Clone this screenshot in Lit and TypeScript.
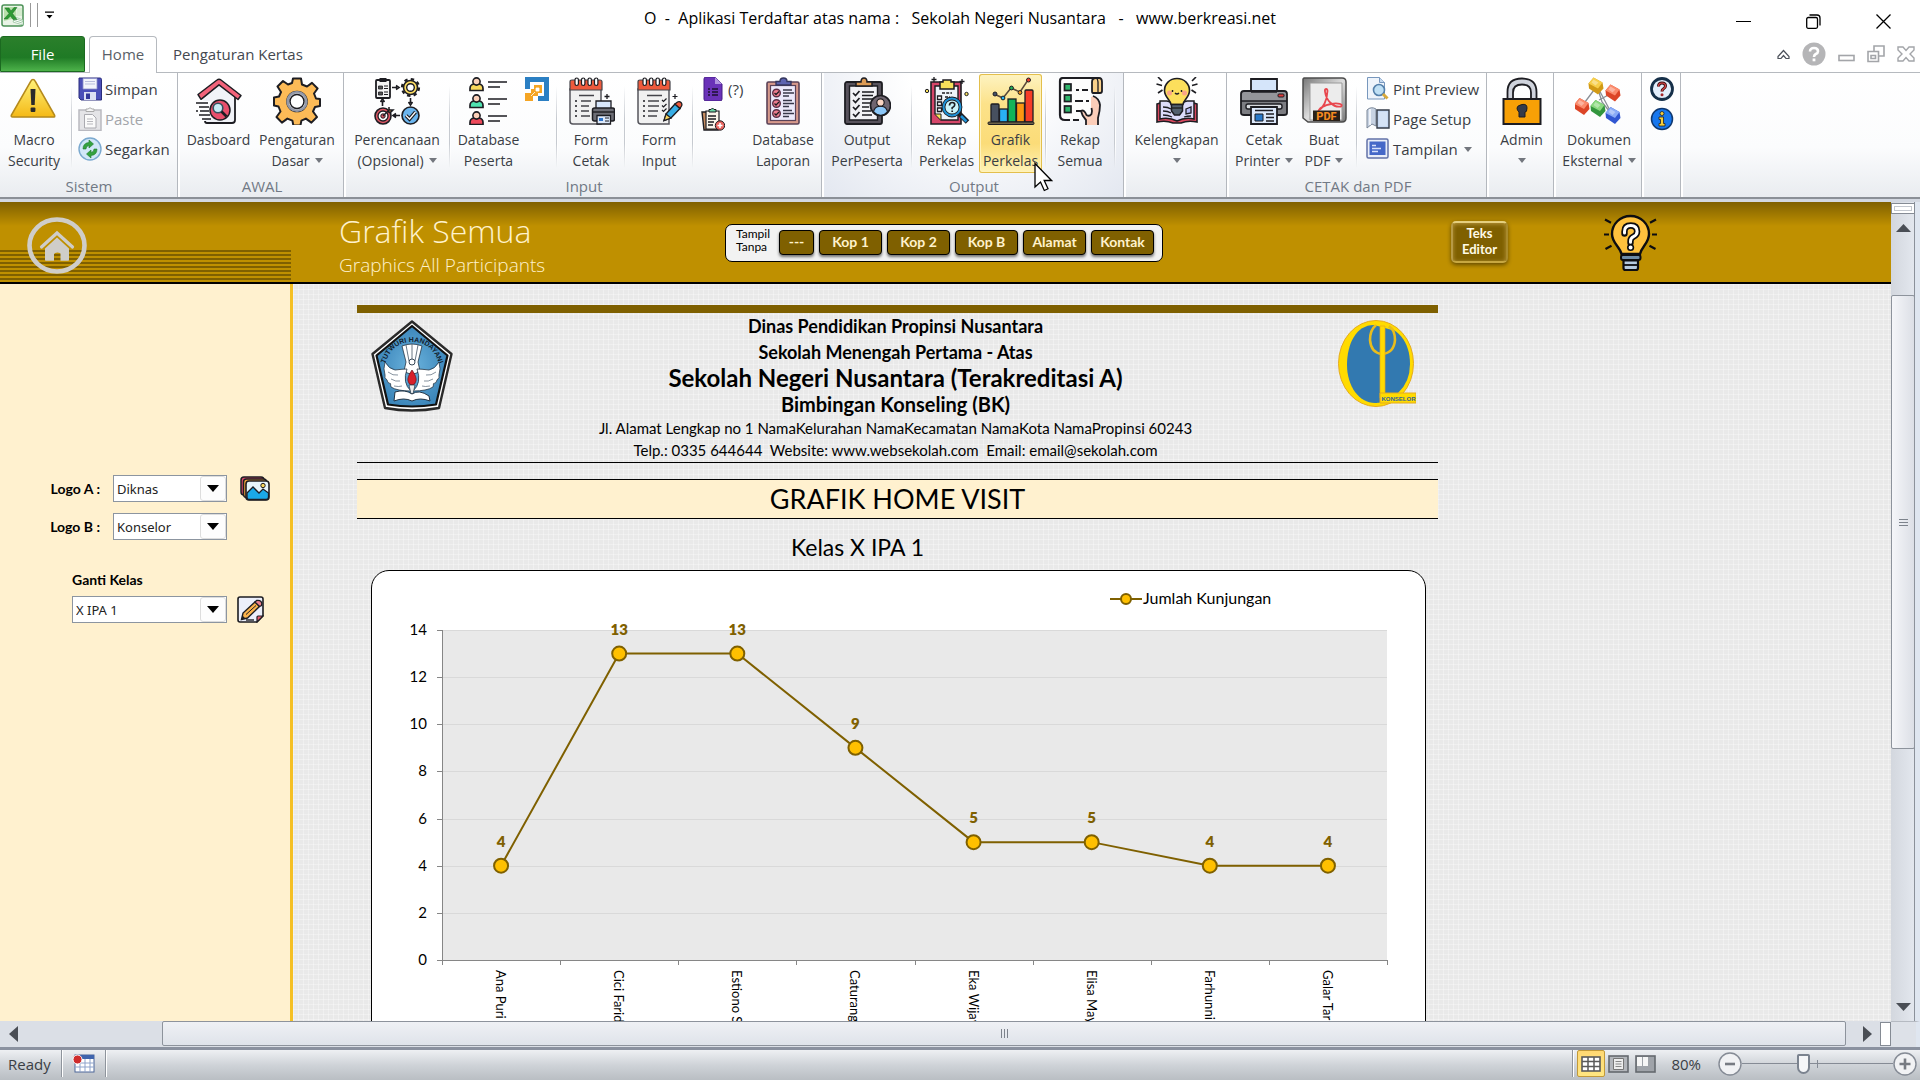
import { LitElement, html, svg, css, nothing } from "lit";
import { customElement, property, state } from "lit/decorators.js";
import { classMap } from "lit/directives/class-map.js";

const K = "#1d1d22";

/* Large ribbon icons, drawn on a 48 x 48 grid. */
const big: Record<string, unknown> = {
  warn: svg`<defs><linearGradient id="wg" x1="0" y1="0" x2="0" y2="1"><stop offset="0" stop-color="#fff27a"/><stop offset="1" stop-color="#f4b916"/></linearGradient></defs>
    <path d="M25 3.500 46 39.500H4z" transform="translate(0 1)" fill="#9a9a9a" opacity=".35"/>
    <path d="M23 2.500c1 0 1.600.5 2 1.300L44.500 38c.5 1.200 0 2-1.300 2H2.600c-1.200 0-1.700-.9-1.200-2L21 3.800c.4-.8 1-1.300 2-1.300z" fill="url(#wg)" stroke="#b58a1c" stroke-width="1.600"/>
    <path d="M20.500 12h5l-.8 16h-3.400z" fill="#2b2b2b"/><rect x="20.600" y="30.500" width="4.800" height="4.500" rx="1" fill="#2b2b2b"/>`,
  dash: svg`<path d="M8 20 24 6l16 13v24c0 2-1 3-3 3H12q-2 0-2-2" fill="#f1f3f8" stroke="${K}" stroke-width="1.800"/>
    <path d="M3 17.500 22 3q2-1.600 4 0l20 15.500-3 4L24 7.800 6 22.300z" fill="#f2637a" stroke="${K}" stroke-width="1.500" stroke-linejoin="round"/>
    <path d="M0 24h16v18H5V28H0z" fill="#fdfdfe"/><path d="M1 26h12M4 30h10M1 34h2m2 0h9M4 38h11M7 42h9" stroke="${K}" stroke-width="1.600"/>
    <circle cx="25" cy="33" r="10" fill="#e8506c" stroke="${K}" stroke-width="1.500"/>
    <circle cx="23" cy="31" r="4.800" fill="#c6ecf5" stroke="#34525f" stroke-width="1.600"/><path d="m26.500 34.500 5 5" stroke="${K}" stroke-width="2.600"/>`,
  gear: svg`<path d="M20 1h8l1 6 5 2 5-3.600 5.600 5.600L41 16l2 5 4 .5v7l-5 1-2 4.500 4 5.500-5.600 5.600-5.500-4-4.500 2-1 5h-7l-1-5-5-2-5.500 4-5.400-5.600 4-5.500-2-5L1 28v-8l5-1 2-4.500L4.500 9 10 3.500 15 7l4-1.500z" transform="translate(0 .5)" fill="#fdbb57" stroke="${K}" stroke-width="2" stroke-linejoin="round"/>
    <circle cx="24" cy="24.500" r="10" fill="#fff" stroke="${K}" stroke-width="1.600"/><circle cx="24" cy="24.500" r="9.300" fill="none" stroke="#9499a8" stroke-width="2.600"/><circle cx="24" cy="24.500" r="7" fill="#fff" stroke="${K}" stroke-width="1.500"/>`,
  plan: svg`<rect x="3" y="3" width="14" height="18" rx="1" fill="#f4f4f4" stroke="${K}" stroke-width="1.800"/><rect x="6.500" y="1" width="7" height="4" fill="${K}"/>
    <path d="M5.500 9h4v3h-4zm0 6h4v3h-4z" fill="#555" stroke="${K}" stroke-width=".8"/><path d="M11 9h4m-4 2.500h4M11 15h4m-4 2.500h4" stroke="${K}" stroke-width="1.200"/>
    <path d="M19 10.500h5m-1-2 3 2-3 2M37.500 21v5m-2-1 2 3 2-3M27 38.500h-6m2-2-3 2 3 2M9.500 29v-5m-2 1 2-3 2 3" fill="none" stroke="${K}" stroke-width="1.600"/>
    <circle cx="37.500" cy="10.500" r="8.500" fill="none" stroke="${K}" stroke-width="2.200" stroke-dasharray="3.400 3.280"/><circle cx="37.500" cy="10.500" r="7" fill="#fbdc62" stroke="${K}" stroke-width="1.600"/><circle cx="37.500" cy="10.500" r="3.800" fill="#fff" stroke="${K}" stroke-width="1.400"/>
    <circle cx="10" cy="39" r="8" fill="#e05765" stroke="${K}" stroke-width="1.600"/><circle cx="10" cy="39" r="5" fill="#fff" stroke="${K}" stroke-width="1.300"/><circle cx="10" cy="39" r="2.200" fill="#e05765" stroke="${K}"/><path d="m10 39 7-7m-1-2v3h4l-2 2h-3" stroke="${K}" stroke-width="1.500" fill="#fdbb57"/>
    <circle cx="37.500" cy="38.500" r="8.500" fill="#6bb5ee" stroke="${K}" stroke-width="1.600"/><path d="m33 38.500 3.500 3.500 6-7" fill="none" stroke="${K}" stroke-width="3.600"/><path d="m33 38.500 3.500 3.500 6-7" fill="none" stroke="#fff" stroke-width="1.300"/>`,
  people: svg`${[["#f9d85c", 0], ["#4fe3b0", 17], ["#ee4a5b", 34]].map(([c, y]) => svg`
      <path d="M5 ${Number(y) + 13.500}v-2q0-4 4-4.500h5q4 .5 4 4.500v2z" fill="${c}" stroke="${K}" stroke-width="1.700"/>
      <circle cx="11.500" cy="${Number(y) + 4.500}" r="3.600" fill="#fbd0b8" stroke="${K}" stroke-width="1.600"/>
      <path d="M23 ${Number(y) + 5}h19M23 ${Number(y) + 10}h12" stroke="${K}" stroke-width="1.600"/>`)}`,
  formPrint: svg`<path d="M3 12v32q0 3 3 3h28V12z" fill="#f1f1f1" stroke="#55555c" stroke-width="1.500"/><path d="M3 13V5q0-2 2-2h28q2 0 2 2v8z" fill="#ee5a3c" stroke="#44444a" stroke-width="1.200"/>
    ${[8, 14.500, 21, 27.500].map(x => svg`<rect x="${x}" y="1" width="3.400" height="7.500" rx="1.700" fill="#fff" stroke="${K}" stroke-width="1.200"/>`)}
    <path d="M12 18.500h15M14 24h10m-10 5h8m-8 5h8m-8 5h9" stroke="#44444a" stroke-width="1.500"/><path d="M8 24h2m-2 5h2m-2 5h2m-2 5h2" stroke="${K}" stroke-width="1.500"/>
    <path d="M40 17v5m-2.500-2.500h5" stroke="${K}" stroke-width="1.300"/>
    <path d="M29 32v-8h15v8" fill="#d7e6fb" stroke="${K}" stroke-width="1.300"/><rect x="25.500" y="31" width="22" height="13" rx="2" fill="#6d6e76" stroke="${K}" stroke-width="1.500"/><path d="M26 35h21" stroke="${K}" stroke-width="1.400"/><path d="M30 38.500h13.500V47H30z" fill="#dce9fb" stroke="${K}" stroke-width="1.300"/><path d="M32 41h4v3h-4z" fill="#2e74c9"/><path d="M38 41h4m-4 3h4" stroke="${K}"/>`,
  formInput: svg`<path d="M3 12v32q0 3 3 3h28V12z" fill="#f1f1f1" stroke="#55555c" stroke-width="1.500"/><path d="M3 13V5q0-2 2-2h28q2 0 2 2v8z" fill="#ee5a3c" stroke="#44444a" stroke-width="1.200"/>
    ${[8, 14.500, 21, 27.500].map(x => svg`<rect x="${x}" y="1" width="3.400" height="7.500" rx="1.700" fill="#fff" stroke="${K}" stroke-width="1.200"/>`)}
    <path d="M12 18.500h15M13 24h11m-11 5h11m-11 5h10m-10 5h9" stroke="#44444a" stroke-width="1.500"/><path d="M8 24h2m-2 5h2m-2 5h2m-2 5h2" stroke="${K}" stroke-width="1.500"/>
    <path d="m27 23 1.500 1.500 3-3m-4.500 7 1.500 1.500 3-3m-4.500 6 1.500 1.500 3-3M40 17v5m-2.500-2.500h5" fill="none" stroke="${K}" stroke-width="1.200"/>
    <path d="m31 37 9-10 5 4.500-9 9.500-7 2.500z" fill="#37aee6" stroke="${K}" stroke-width="1.400"/><path d="m40 27 2.500-2q2-1 3.500.5t.5 3.500L45 31.500z" fill="#ee5a3c" stroke="${K}" stroke-width="1.300"/><path d="m31 37 5 4-7 2.500z" fill="#f8d55d" stroke="${K}" stroke-width="1.200"/>`,
  dbLaporan: svg`<rect x="8" y="5" width="32" height="42" rx="1.500" fill="#d79a8c" stroke="#5b4257" stroke-width="1.600"/><rect x="11.500" y="8.500" width="25" height="35" fill="#ece9fb" stroke="#5b4257" stroke-width="1.200"/>
    <path d="M17 8V4.500h4Q21 1 24.500 1T28 4.500h4V8z" fill="#5d63b0" stroke="#34365e" stroke-width="1.400"/>
    ${[16, 26.500, 36.500].map(y => svg`<circle cx="17.500" cy="${y}" r="3.800" fill="#ee7c8e" stroke="#5b2f45" stroke-width="1.400"/><path d="m15.500 ${y} 1.500 1.500 3-3" fill="none" stroke="${K}" stroke-width="1.300"/><path d="M24 ${y - 3}h9M24 ${y}h11M24 ${y + 3}h6" stroke="#38384a" stroke-width="1.400"/>`)}`,
  output: svg`<rect x="2" y="5" width="37" height="42" rx="2" fill="#57525c" stroke="${K}" stroke-width="1.800"/><path d="M6.500 9h28v34H6.500z" fill="#f2f2f6" stroke="${K}" stroke-width="1.400"/><path d="M13 9V5h5q0-4 3-4t3 4h5v4z" fill="#dc9a54" stroke="${K}" stroke-width="1.500"/>
    <path d="m10 16 2.500 2.500L16.500 14M10 23l2.500 2.500L16.500 21M10 30l2.500 2.500L16.500 28M10 37l2.500 2.500L16.500 35" fill="none" stroke="${K}" stroke-width="1.700"/><path d="M19 15h12M19 18.500h11M19 22h12M19 26h8M19 30h7M19 34h9M19 38h10" stroke="${K}" stroke-width="1.400"/>
    <circle cx="37.500" cy="28.500" r="10" fill="#6f6570" stroke="${K}" stroke-width="1.700"/><path d="M30.500 35q1-5 5-5.500h4q4 .5 5 5.500-3 3.500-7 3.300t-7-3.300z" fill="#8cc7f8" stroke="${K}" stroke-width="1.200"/><circle cx="37.500" cy="25.500" r="3.700" fill="#fbd6c4" stroke="${K}" stroke-width="1.200"/>`,
  rekapKelas: svg`<path d="M8 5h30v42H8z" fill="#d64669" stroke="${K}" stroke-width="1.600"/><path d="M12 9h23v34H18l-6-6z" fill="#eef4fa" stroke="${K}" stroke-width="1.400"/><path d="M12 37h6v6" fill="#f7e05a" stroke="${K}"/>
    <path d="M17 12V5h3V3h8v2h3v7z" fill="#f7e05a" stroke="${K}" stroke-width="1.500"/><path d="M19 16h10M22 20h5M22 23h3M22 28h3M22 33h3" stroke="${K}" stroke-width="1.600" stroke-dasharray="3 1.200"/>
    <path d="M14.500 19h4v3.500h-4zm0 6h4v3.500h-4zm0 6h4v3.500h-4z" fill="#fff" stroke="${K}" stroke-width="1.300"/>
    <circle cx="29" cy="30" r="8.500" fill="#c9f4fb" stroke="${K}" stroke-width="3.800"/><circle cx="29" cy="30" r="8.500" fill="none" stroke="#1f93d8" stroke-width="2"/><path d="M26.500 28.500q0-3 2.700-3t2.500 2.600q0 1.500-2.500 2.600v1.500m0 1.300v1.500" fill="none" stroke="${K}" stroke-width="1.700"/>
    <path d="m36 36.500 8.500 8.500" stroke="${K}" stroke-width="5"/><path d="m38 39 5.500 5.500" stroke="#1f93d8" stroke-width="2.600"/><path d="M11 0v5M8.500 2.500h5M39 2v5m-2.500-2.500h5" stroke="${K}" stroke-width="1.300"/><circle cx="4" cy="14" r="1.700" fill="#f7e05a" stroke="${K}"/><circle cx="43.500" cy="17" r="1.700" fill="#f7e05a" stroke="${K}"/>`,
  grafik: svg`<path d="m7 17 9 4 8-10 9 4 8-12" fill="none" stroke="#5a4a3a" stroke-width="1.500"/>
    <circle cx="8" cy="17" r="2" fill="#43506a" stroke="${K}"/><circle cx="16" cy="21" r="1.900" fill="#29b6f6" stroke="${K}"/><circle cx="24.500" cy="11" r="1.900" fill="#1fb35a" stroke="${K}"/><circle cx="33" cy="15.500" r="1.900" fill="#f99b1c" stroke="${K}"/><circle cx="41.500" cy="3" r="2" fill="#f23b2a" stroke="${K}"/>
    <rect x="4" y="27" width="8" height="18" rx="1" fill="#47505f" stroke="${K}" stroke-width="1.300"/><rect x="12.500" y="32" width="8" height="13" fill="#29b0f3" stroke="${K}" stroke-width="1.300"/><rect x="21" y="22" width="8" height="23" fill="#12b359" stroke="${K}" stroke-width="1.300"/><rect x="29.500" y="26" width="8" height="19" fill="#fb9611" stroke="${K}" stroke-width="1.300"/><rect x="38" y="13" width="8" height="32" rx="1" fill="#f53d26" stroke="${K}" stroke-width="1.300"/><rect x="1" y="45" width="46" height="2.500" rx="1" fill="#6f6448" stroke="${K}"/>`,
  rekapSemua: svg`<path d="M7 1h32q-3 2-3 5v36H8q-4 0-4-4V4q0-3 3-3z" fill="#fdfdfd"/><path d="M40 1H7Q4 1 4 4v34q0 5 5 5h5m3 0h6" fill="none" stroke="${K}" stroke-width="2.200"/><path d="M36 5q0-4 4-4h3q3 0 3 4v9q0 2-2 2h-7q-1 0-1-2z" fill="#fbd28b" stroke="${K}" stroke-width="1.800"/><path d="M42 15V5q0-3-2-4" fill="none" stroke="${K}" stroke-width="1.300"/>
    ${[7, 18, 29].map(y => svg`<rect x="8.500" y="${y}" width="6.500" height="6.500" fill="#2fb56c" stroke="${K}" stroke-width="1.700"/>`)}<path d="M20 13h3m3 0h6M19 24h8m3 0h3M20 34h8" stroke="${K}" stroke-width="2"/>
    <path d="M30 48v-5q-4-4-5-9 3-2 5.500 4 2 2 4.500 1V20q6-3 8 6 1 8-1 14v8z" fill="#fbcdb9"/><path d="M30 48v-5q-4-4-5-9 3-2 5.500 4 3 2 5-1 1-3 0-6M37 19q6 2 7 9 0 6-2 13v7" fill="none" stroke="${K}" stroke-width="1.800"/>`,
  bulbBook: svg`<path d="M4 27q9-4 20 1 11-5 20-1v18q-9-2-16 1h-8q-7-3-16-1z" fill="#d9485e" stroke="${K}" stroke-width="1.600"/><path d="M7 24h7l10 3 10-3h7v18q-9-2-17 2-8-4-17-2z" fill="#dcdcfb" stroke="${K}" stroke-width="1.500"/><path d="M10 30q5 0 8 2m-8 2q5 0 8 2m-8 2q5 0 9 2M31 40q3-1 7-1" stroke="${K}" stroke-width="1.300" fill="none"/><path d="m33 32 5-2v6l-5 1z" fill="#b9bdf5" stroke="${K}" stroke-width="1.300"/>
    <path d="M24 1.500c7.500 0 12.500 5.500 12.500 12 0 7-6 9-6.500 14H18c-.5-5-6.500-7-6.500-14 0-6.500 5-12 12.500-12z" fill="#fcdf5c" stroke="${K}" stroke-width="1.600"/><circle cx="16.500" cy="16" r="2.500" fill="#f9a488"/><circle cx="31.500" cy="16" r="2.500" fill="#f9a488"/><path d="M19.500 13v2m9-2v2m-6.500 1q2 2 4 0" stroke="${K}" stroke-width="1.400" fill="none"/>
    <path d="M18.500 27.500h11V34l-3 4h-5l-3-4z" fill="#52606e" stroke="${K}" stroke-width="1.500"/><path d="M19 31h10" stroke="#222" stroke-width="1.400"/><path d="m9 4-4-4M9 8.500 3.500 7m6 6L5 16M39 4l4-4m-4 8.500L44.500 7m-6 6 4.500 3" stroke="${K}" stroke-width="1.600"/>`,
  printer: svg`<path d="M11 17V2h26v15" fill="#d5e5fa" stroke="${K}" stroke-width="1.800"/><path d="M4 14h40q3 0 3 3v19q0 2-3 2H4q-3 0-3-2V17q0-3 3-3z" fill="#7c7d82" stroke="${K}" stroke-width="1.800"/><path d="M2 24h44v-6q0-3-3-3H5q-3 0-3 3z" fill="#94959a"/><path d="M1 24h46M11 15h26" stroke="${K}" stroke-width="1.600"/><rect x="38" y="17" width="6" height="3" rx="1" fill="#e23d3d" stroke="${K}"/>
    <rect x="6" y="27" width="36" height="5" rx="2" fill="#d7dade" stroke="${K}" stroke-width="1.400"/><path d="M11 30h26v17H11z" fill="#dce9fb" stroke="${K}" stroke-width="1.800"/><path d="M15 37h8v7h-8z" fill="#2879c9" stroke="${K}"/><path d="M15 33.500h18M26 37h8m-8 3.500h8m-8 3.500h8" stroke="${K}" stroke-width="1.500"/>`,
  pdf: svg`<defs><linearGradient id="pg" x1="0" y1="0" x2="1" y2="1"><stop offset="0" stop-color="#777"/><stop offset=".5" stop-color="#ddd"/><stop offset="1" stop-color="#777"/></linearGradient></defs><path d="M4 1h38q4 0 4 4v36q0 4-4 4H8L3 41V2z" fill="url(#pg)" stroke="#4c4c4c" stroke-width="1.500"/><path d="M10 6h32v37H10z" fill="#ececec" stroke="#999"/>
    <path d="M19 33c4-2 8-9 8.500-19 0-3-3-2.500-2.500.5C26 23 33 31 41 29.500c3-2-3-4-10-2.500S20 31 19 33z" fill="none" stroke="#e8474e" stroke-width="1.800"/><path d="M13 33.500h27V44H13z" fill="#2a2119"/><text x="26.500" y="42.500" text-anchor="middle" font-family="Roboto, sans-serif" font-weight="800" font-size="11" fill="#f58a1f">PDF</text>`,
  lock: svg`<path d="M12 23V15Q12 4.500 24 4.500T36 15v8" fill="none" stroke="#cfd3dc" stroke-width="4.600"/><path d="M15 23V15.500Q15 7.500 24 7.500t9 8V23" fill="none" stroke="${K}" stroke-width="1.800"/><path d="M9.500 22v-7Q9.500 1.500 24 1.500T38.500 15v7" fill="none" stroke="${K}" stroke-width="1.800"/>
    <rect x="5.500" y="22" width="37" height="25" fill="#f7a006" stroke="${K}" stroke-width="2"/><path d="M21 35q-2-1.500-2-4t5-3.500 5 3.500-2 4v5h-6z" fill="#343b4a" stroke="${K}"/>`,
  gems: svg`<path d="m22 9 5 16 11 14M22 9 7 29m17-6 15-8M22 9l16 30" stroke="#8a8f96" stroke-width="1.300" fill="none"/>
    ${[["#f7cf4a", "#d29a14", 21, 8.500], ["#fb8b6c", "#dc4527", 38, 15.500], ["#fb8b6c", "#dc4527", 7, 29], ["#8ad97f", "#33963e", 23, 31], ["#8aabf7", "#3157d2", 38, 38]].map(([a, c, x, y]) => svg`<g transform="translate(${x} ${y})"><path d="m-2.500-8 9 5 1 6-5.500 6-9-6-.5-5z" fill="${c}"/><path d="m-2.500-8 9 5-4.500 6-9.500-5z" fill="${a}"/><path d="m-2.500-6 5 3-3 3-4-3z" fill="#fff" opacity=".35"/></g>`)}`
};

/* Small ribbon icons, drawn on a 24 x 24 grid. */
const small: Record<string, unknown> = {
  save: svg`<path d="M1 1h21q1.500 0 1.500 1.500V23H3l-2-2z" fill="#4b4fb8" stroke="#2a2d7c"/><path d="M5 1.500h14V12H5z" fill="#f2f4fb" stroke="#8b91c9" stroke-width=".8"/><path d="M7 4.500h10M7 7h10" stroke="#b9bedd"/><path d="M6 15h12v8H6z" fill="#dcdff3"/><path d="M8 16.500h4V22H8z" fill="#34389a"/>`,
  paste: svg`<path d="M1 3h22v20.500H1z" fill="#e4e4e7" stroke="#b9b9c0" stroke-width="1.500"/><path d="M8 4.500V2h2q2-2.500 4 0h2v2.500z" fill="#f5f5f6" stroke="#aaa"/><path d="M6.500 7.500h8l3.500 3.500v10h-11.500z" fill="#fafafa" stroke="#aaaab0"/><path d="M9 12h6m-6 2.500h6M9 17h6" stroke="#b8b8bd"/>`,
  refresh: svg`<circle cx="12" cy="12" r="11" fill="#d2e7f8" stroke="#7ba9cf" stroke-width="1.400"/><path d="M5 12q0-6 6-6.500V3l4.500 4L11 11V8.500Q8 9 8 12zM19 12q0 6-6 6.500V21l-4.500-4L13 13v2.500q3-.5 3-3.500z" fill="#35a23f" stroke="#1e7a2b" stroke-width=".6"/>`,
  square: svg`<path d="M0 0h24v24H13v-5h6V5H5v7H0z" fill="#2b7fc3"/><path d="M0 24V16h6v-4h3V8h8v8h-4v3H8v5z" fill="#f5a524"/><path d="M11 11h3v3h-3zM10 15l-4 4" fill="#fff" stroke="#fff" stroke-width=".8"/>`,
  gform: svg`<path d="M3 2q0-2 2-2h9l7 7v15q0 2-2 2H5q-2 0-2-2z" fill="#6a32b8" stroke="#451c85"/><path d="M14 0v7h7z" fill="#b294e0"/><path d="M7 12h2m-2 3h2m-2 3h2m2-6h6m-6 3h6m-6 3h6" stroke="#1d1030" stroke-width="1.500"/>`,
  clipAdd: svg`<path d="M1 5h16v18H3z" fill="#c98f62" stroke="${K}" stroke-width="1.400"/><path d="M5 4h13v16q-1 2-3 2H5z" fill="#faf5ea" stroke="${K}" stroke-width="1.200"/><path d="M8 5V2.500h2q1.500-3 3 0h2V5z" fill="#69d4a4" stroke="${K}"/><path d="M7 9h8m-8 3h8m-8 3h6m-6 3h5" stroke="${K}" stroke-width="1.300"/><circle cx="19" cy="18.500" r="4.700" fill="#e8655f" stroke="${K}"/><path d="M19 16v5m-2.500-2.500h5" stroke="#fff" stroke-width="1.500"/>`,
  preview: svg`<path d="M1.500.5h12l5 5V22h-17z" fill="#eef4fb" stroke="#7797bd"/><path d="M13.500.5v5h5" fill="#c5d9ef" stroke="#7797bd"/><circle cx="13" cy="13" r="5.500" fill="#bfe0f5" stroke="#5480ab" stroke-width="1.600"/><path d="m17 17 4.500 4.500" stroke="#d8a93a" stroke-width="3"/>`,
  pageSetup: svg`<path d="M1 3q4-4 9-1v17l-4-2-5 4z" fill="#c8d3e3" stroke="#7a8798"/><path d="M4 2v16" stroke="#eef2f8" stroke-width="2"/><path d="M11 3h12v18H11z" fill="#c8daf3" stroke="#333b48" stroke-width="1.400"/><path d="M13 5h8v14h-8z" fill="#d5e3f6"/>`,
  view: svg`<rect x="1" y="2" width="21" height="19" rx="1.500" fill="#e9eef9" stroke="#6272a8" stroke-width="1.500"/><rect x="3.500" y="4.500" width="16" height="13.500" fill="#4568c8"/><path d="M6 8.500h4m-4 3h9m-9 3h6" stroke="#d6e0fb" stroke-width="1.500"/>`,
  help: svg`<circle cx="12" cy="12" r="10.500" fill="#e3eefb" stroke="#163049" stroke-width="2.800"/><path d="M8.500 9.500Q8.500 6 12 6t3.500 3q0 1.800-2.200 3-1.300.8-1.300 2.500" fill="none" stroke="#3b1014" stroke-width="3"/><path d="M8.500 9.500Q8.500 6 12 6t3.500 3q0 1.800-2.200 3-1.300.8-1.300 2.500" fill="none" stroke="#e14848" stroke-width="1.200"/><circle cx="12" cy="17.800" r="1.500" fill="#a3262a"/>`,
  info: svg`<circle cx="12" cy="12" r="10.500" fill="#1777ee" stroke="#10386f" stroke-width="1.500"/><path d="M9 10h4.500v6.500H15V19H9v-2.500h1.500V12.500H9z" fill="#f6cf3c" stroke="#222" stroke-width=".8"/><circle cx="12" cy="6.500" r="2" fill="#f6cf3c" stroke="#222" stroke-width=".8"/>`
};

interface BigItem { kind: "big"; icon: string; lines: string[]; menu?: boolean; active?: boolean }
interface StackItem { kind: "stack"; rows: { icon: string; text?: string; name: string; off?: boolean; menu?: boolean }[] }
interface SepItem { kind: "sep" }
type Item = BigItem | StackItem | SepItem;

const sep: SepItem = { kind: "sep" };
const b = (icon: string, lines: string[], menu = false, active = false): BigItem => ({ kind: "big", icon, lines, menu, active });

const groups: { id: string; label?: string; items: Item[] }[] = [
  { id: "sistem", label: "Sistem", items: [b("warn", ["Macro", "Security"]), sep, { kind: "stack", rows: [
    { icon: "save", text: "Simpan", name: "Simpan" }, { icon: "paste", text: "Paste", name: "Paste", off: true }, { icon: "refresh", text: "Segarkan", name: "Segarkan" }] }] },
  { id: "awal", label: "AWAL", items: [b("dash", ["Dasboard"]), b("gear", ["Pengaturan", "Dasar"], true)] },
  { id: "input", label: "Input", items: [b("plan", ["Perencanaan", "(Opsional)"], true), sep, b("people", ["Database", "Peserta"]),
    { kind: "stack", rows: [{ icon: "square", name: "Aplikasi" }] }, sep, b("formPrint", ["Form", "Cetak"]), sep, b("formInput", ["Form", "Input"]), sep,
    { kind: "stack", rows: [{ icon: "gform", text: "(?)", name: "Formulir" }, { icon: "clipAdd", name: "Tambah" }] }, b("dbLaporan", ["Database", "Laporan"])] },
  { id: "output", label: "Output", items: [b("output", ["Output", "PerPeserta"]), sep, b("rekapKelas", ["Rekap", "Perkelas"]), b("grafik", ["Grafik", "Perkelas"], false, true), sep, b("rekapSemua", ["Rekap", "Semua"]), sep] },
  { id: "kelengkapan", items: [b("bulbBook", ["Kelengkapan", ""], true)] },
  { id: "cetak", label: "CETAK dan PDF", items: [b("printer", ["Cetak", "Printer"], true), b("pdf", ["Buat", "PDF"], true), sep, { kind: "stack", rows: [
    { icon: "preview", text: "Pint Preview", name: "Pint Preview" }, { icon: "pageSetup", text: "Page Setup", name: "Page Setup" }, { icon: "view", text: "Tampilan", name: "Tampilan", menu: true }] }] },
  { id: "admin", items: [b("lock", ["Admin", ""], true)] },
  { id: "dokumen", items: [b("gems", ["Dokumen", "Eksternal"], true)] },
  { id: "bantuan", items: [{ kind: "stack", rows: [{ icon: "help", name: "Bantuan" }, { icon: "info", name: "Info" }] }] }
];

@customElement("ribbon-bar")
class RibbonBar extends LitElement {
  static styles = css`
    :host { display: block; }
    * { box-sizing: border-box; }
    .bar { display: grid; grid-template-columns: 180px 166px 478px 302px 103px 260px 67px 88px 39px 1fr; height: 127px; border-top: 1px solid #b6babf; border-bottom: 2px solid #8b9097; background: linear-gradient(#ffffff, #fbfcfd 60%, #e9ecf0); }
    .group { display: grid; grid-template-rows: 102px 22px; border-right: 2px solid #fff; box-shadow: inset -1px 0 #b4b8be; }
    .items { display: grid; padding-top: 1px; }
    .sistem .items { grid-template-columns: 68px 8px 1fr; }
    .awal .items { grid-template-columns: 77px 80px; }
    .input .items { grid-template-columns: 102px 4px 73px 30px 4px 64px 4px 64px 4px 56px 64px; }
    .output .items { grid-template-columns: 86px 4px 65px 63px 8px 60px 10px; }
    .output { background: radial-gradient(ellipse at 50% 0, #ffffff 30%, #dfe4ee 110%); }
    .cetak .items { grid-template-columns: 70px 50px 16px 1fr; }
    .bantuan .items { padding-left: 5px; }
    .label { text-align: center; font-size: 15px; line-height: 22px; color: #717985; }
    button { font: inherit; color: inherit; background: none; border: 0; padding: 0; white-space: nowrap; }
    .big { position: relative; display: flex; flex-direction: column; align-items: center; height: 99px; padding-top: 3px; font-size: 14px; color: #3a3e45; }
    .big svg.pic { width: 48px; height: 48px; margin-bottom: 4px; flex: none; }
    .line { display: flex; align-items: center; justify-content: center; gap: 5px; height: 21px; line-height: 21px; }
    .big.active { background: linear-gradient(#fdf3c2, #fce28a 30%, #fbdc78 70%, #fff3b8); box-shadow: inset 0 0 0 1px #e3bf4c, inset 0 0 0 2px #fff2bb; border-radius: 3px; }
    .caret { width: 8px; height: 5px; flex: none; }
    .stack { display: flex; flex-direction: column; padding-left: 2px; }
    .input .stack { padding-left: 0; }
    .input .sep + .stack { padding-left: 6px; }
    .cetak .stack, .bantuan .stack { padding-left: 1px; }
    .row { display: flex; align-items: center; gap: 3px; height: 30px; font-size: 15px; line-height: 22px; color: #3a3e45; }
    .row svg.pic { width: 24px; height: 24px; }
    .row .caret { margin-left: 3px; }
    .row:disabled { color: #a3a5aa; }
    .sep { width: 2px; height: 82px; margin: 12px auto 0; background: linear-gradient(90deg, #c6cad0 50%, #fff 50%); -webkit-mask: linear-gradient(#0000, #000 40%, #000 70%, #0000); mask: linear-gradient(#0000, #000 40%, #000 70%, #0000); }
    .cursor { position: absolute; left: 55px; top: 88px; width: 19px; height: 30px; z-index: 2; pointer-events: none; }
  `;

  private caret = html`<svg class="caret" viewBox="0 0 8 5" aria-hidden="true"><path d="M0 0h8L4 5z" fill="#73777e"/></svg>`;

  private item(i: Item) {
    if (i.kind === "sep") return html`<span class="sep"></span>`;
    if (i.kind === "stack") return html`<div class="stack">${i.rows.map(r => html`
      <button class="row" ?disabled=${r.off} aria-label=${r.name}><svg class="pic" viewBox="0 0 24 24" aria-hidden="true">${small[r.icon]}</svg>${r.text ? html`<span>${r.text}</span>` : nothing}${r.menu ? this.caret : nothing}</button>`)}</div>`;
    return html`<button class=${classMap({ big: true, active: !!i.active })}>
      <svg class="pic" viewBox="0 0 48 48" aria-hidden="true">${big[i.icon]}</svg>
      ${i.lines.map((l, n) => html`<span class="line">${l}${i.menu && n === i.lines.length - 1 ? this.caret : nothing}</span>`)}
      ${i.active ? html`<svg class="cursor" viewBox="0 0 19 30" aria-hidden="true"><path d="M1 1.500V25l5.500-5 3.800 8.500 3.700-1.700-3.800-8.300h7.300z" fill="#fff" stroke="#000" stroke-width="1.300"/></svg>` : nothing}
    </button>`;
  }

  render() {
    return html`<div class="bar">${groups.map(g => html`
      <section class="group ${g.id}"><div class="items">${g.items.map(i => this.item(i))}</div>${g.label ? html`<div class="label">${g.label}</div>` : nothing}</section>`)}</div>`;
  }
}

@customElement("visit-chart")
class VisitChart extends LitElement {
  static styles = css`
    :host { display: block; }
    svg { display: block; width: 100%; }
    text { font-family: Lato, "Liberation Sans", sans-serif; font-size: 15px; fill: #000; }
    .value { font-weight: 800; font-size: 15px; fill: #7f6000; text-anchor: middle; }
    .axis { text-anchor: end; }
    .name { font-size: 13px; }
    .legend { font-size: 16px; }
    .series { fill: none; stroke: #7f6000; stroke-width: 2; }
    .dot { fill: #ffc000; stroke: #7f6000; stroke-width: 2; }
    .grid { stroke: #d9d9d9; }
    .tick { stroke: #868686; }
  `;

  @property({ attribute: false }) points: [string, number][] = [];

  render() {
    const x0 = 70, x1 = 1015, y0 = 389, unit = 330 / 14;
    const step = (x1 - x0) / this.points.length;
    const px = (i: number) => x0 + step * (i + .5);
    const py = (v: number) => y0 - v * unit;
    return html`<svg viewBox="0 0 1053 460" role="img" aria-label="Jumlah Kunjungan">
      <rect x=${x0} y="59" width=${x1 - x0} height="330" fill="#e9e9e9"/>
      ${[0, 2, 4, 6, 8, 10, 12, 14].map(v => svg`<path class="grid" d="M${x0} ${Math.round(py(v)) + .5}H${x1}"/><path class="tick" d="M${x0 - 5} ${Math.round(py(v)) + .5}h5"/><text class="axis" x="55" y="${Math.round(py(v)) + 5}">${v}</text>`)}
      <path class="tick" d="M${x0 + .5} 59V394M${x0} 389.500H${x1}"/>
      ${this.points.map((_, i) => svg`<path class="tick" d="M${Math.round(x0 + step * (i + 1)) + .5} 389v5"/>`)}
      <polyline class="series" points=${this.points.map(([, v], i) => `${px(i)},${py(v)}`).join(" ")}/>
      ${this.points.map(([n, v], i) => svg`<circle class="dot" cx=${px(i)} cy=${py(v)} r="7"/><text class="value" x=${px(i)} y="${py(v) - 19}">${v}</text><text class="name" transform="translate(${px(i) - 5} 399) rotate(90)">${n}</text>`)}
      <path class="series" d="M738 28h32"/><circle class="dot" cx="754" cy="28" r="5"/><text class="legend" x="771" y="33">Jumlah Kunjungan</text>
    </svg>`;
  }
}

@customElement("app-root")
class AppRoot extends LitElement {
  static styles = css`
    :host { display: block; height: 100vh; font-family: "Open Sans", "Noto Sans", sans-serif; color: #222; }
    * { box-sizing: border-box; }
    button { font: inherit; color: inherit; background: none; border: 0; padding: 0; }
    a { color: inherit; text-decoration: none; }
    svg { display: block; }
    .app { display: flex; flex-direction: column; height: 100%; overflow: hidden; background: #fff; }

    .title { display: grid; grid-template-columns: 1fr auto 1fr; align-items: center; height: 36px; }
    .quick { display: flex; align-items: center; gap: 6px; padding: 0 0 6px 1px; }
    .quick .bar { width: 1px; height: 24px; background: #999; }
    .quick .bar + button { padding-left: 1px; }
    .title h1 { margin: 0; font-size: 16px; font-weight: 400; color: #000; white-space: pre; }
    .win { display: flex; justify-content: flex-end; align-items: center; gap: 55px; padding: 7px 29px 0 0; }

    .tabs { display: flex; align-items: flex-end; height: 36px; font-size: 15px; line-height: 20px; }
    .tabs button { height: 36px; }
    .tabs .file { width: 85px; color: #fff; background: linear-gradient(#2b7f2b, #1f7a25 60%, #4db24a); border: 1px solid #1b6a20; border-radius: 3px 3px 0 0; }
    .tabs .home { width: 68px; margin: 0 16px -1px 4px; height: 37px; padding-bottom: 2px; color: #5a5f68; background: #fff; border: 1px solid #b6babf; border-bottom: 0; border-radius: 4px 4px 0 0; position: relative; }
    .tabs .paper { color: #444850; }
    .tools { display: flex; align-items: center; gap: 12px; margin-left: auto; padding-right: 5px; height: 36px; }

    .gap { height: 3px; flex: none; background: #d3d8e1; }
    .main { display: grid; grid-template-columns: minmax(0, 1fr) 29px; grid-template-rows: minmax(0, 1fr) 26px; flex: 1; min-height: 0; }
    .view { display: flex; flex-direction: column; min-height: 0; overflow: hidden; }

    .head { display: grid; grid-template-columns: 291px 434px 726px 153px 1fr; height: 82px; flex: none; border-bottom: 2px solid #000; background: linear-gradient(#7f6000, #bf9000 24px); }
    .brand { padding: 15px 0 0 27px; background: repeating-linear-gradient(#0000 0 2px, #7f6000 2px 4px) 0 100% / 100% 34px no-repeat; }
    .heading { padding: 9px 0 0 48px; color: #fff2cc; font-weight: 300; }
    .heading h2 { margin: 0; font-size: 32px; line-height: 40px; font-weight: 300; }
    .heading p { margin: 0; font-size: 19px; line-height: 28px; }
    .kop { justify-self: start; align-self: start; display: flex; align-items: center; gap: 5px; height: 38px; margin-top: 22px; padding: 0 8px 2px 10px; background: #f2f2f2; border: 1px solid #000; border-radius: 7px; font-family: Lato, sans-serif; }
    .kop p { margin: 0; width: 38px; font-size: 12px; line-height: 13px; color: #000; padding-bottom: 4px; }
    .kop button { width: 63px; height: 25px; padding-bottom: 1px; border: 1px solid #000; border-radius: 4px; background: #7f6000; color: #fff2cc; font-weight: 700; font-size: 14px; box-shadow: 0 2px 3px #0008; }
    .kop button.none { width: 35px; }
    .teks { align-self: start; justify-self: start; margin-top: 19px; width: 57px; height: 42px; padding-bottom: 2px; border-radius: 5px; background: #7f6000; border: 2px solid; border-color: #e5cf7e #a88a2c #c7a741 #b79a45; box-shadow: 0 2px 4px #0007, inset 0 1px 4px #b9973e; color: #fffbe8; font: 700 13px/16px Lato, sans-serif; }
    .idea { align-self: start; justify-self: start; margin-top: 12px; }

    .body { display: grid; grid-template-columns: 293px minmax(0, 1fr); flex: 1; min-height: 0; }
    .side { background: #fff1cf; border-right: 3px solid #f5c024; padding-top: 191px; font-family: Lato, sans-serif; font-size: 14px; color: #000; }
    .field { display: grid; grid-template-columns: 100px 114px auto; column-gap: 13px; align-items: center; margin-bottom: 11px; }
    .field label { font-weight: 700; text-align: right; }
    .field .pick { height: 27px; }
    .class { display: grid; grid-template-columns: 155px auto; column-gap: 10px; row-gap: 7px; padding: 20px 0 0 72px; align-items: center; }
    .class label { grid-column: 1 / -1; font-weight: 700; line-height: 18px; }
    .class .pick { height: 27px; }
    .pick { position: relative; }
    .pick select { appearance: none; width: 100%; height: 100%; padding: 0 28px 0 3px; border: 1px solid #8c95a0; border-radius: 0; background: #fff; font: 13px "Noto Sans", sans-serif; color: #222; }
    .pick span { position: absolute; right: 1px; top: 1px; bottom: 1px; width: 26px; border: 1px solid #ddd; border-radius: 3px; background: #fdfdfd; display: grid; place-items: center; pointer-events: none; }

    .sheet { overflow: hidden; padding: 21px 0 0 64px; background-color: #e9e9e9; background-image: repeating-linear-gradient(90deg, #ffffff4d 0 1px, #0000 1px 5px), repeating-linear-gradient(#ffffff4d 0 1px, #0000 1px 5px); }
    .page { max-width: 1081px; margin-right: 32px; font-family: Lato, "Liberation Sans", sans-serif; color: #000; }
    .letter { display: grid; grid-template-columns: 82px 1fr 82px; padding: 0 18px 0 14px; border-top: 8px solid #7f6000; border-bottom: 1px solid #000; }
    .letter svg { margin-top: 7px; }
    .lines { text-align: center; white-space: pre; }
    .lines p { margin: 0; line-height: 26px; font-weight: 700; font-size: 18px; }
    .lines .school { font-size: 24px; }
    .lines .unit { font-size: 20px; }
    .lines .addr { font-weight: 400; font-size: 15px; line-height: 22px; }
    .lines .addr:last-child { line-height: 23px; }
    .band { margin-top: 16px; height: 40px; display: grid; place-items: center; background: #fff1cf; border: solid #000; border-width: 1px 0; }
    .band h3 { margin: 0; font-size: 27px; font-weight: 400; line-height: 38px; }
    .kelas { margin: 0; padding: 5px 80px 0 0; text-align: center; font-size: 23px; font-weight: 400; line-height: 46px; }
    .card { margin: 0 12px 0 14px; background: #fff; border: 1px solid #000; border-radius: 18px 18px 0 0; }

    .vbar { display: flex; flex-direction: column; align-items: center; padding-right: 5px; background: linear-gradient(90deg, #d3d7de, #e3e7ee 80%, #8b919a 80% 84%, #dfe6f0 84%); }
    .vbar .split { width: 24px; height: 11px; margin-top: 1px; border: 1px solid #858b94; background: #fff; box-shadow: inset 0 0 0 2px #fff, inset 0 0 0 3px #c3c7ce; flex: none; }
    .vbar button, .hbar button { display: grid; place-items: center; flex: none; }
    .vbar button { width: 24px; height: 28px; }
    .vtrack { flex: 1; width: 24px; padding-top: 53px; min-height: 0; }
    .vthumb { height: 65%; border: 1px solid #8d939c; border-radius: 2px; background: linear-gradient(90deg, #f5f6f9, #dcdfe6); display: grid; place-items: center; }
    .hbar { display: flex; align-items: center; background: #dbdfe6; }
    .hbar button { width: 26px; height: 24px; }
    .htrack { flex: 1; height: 26px; padding: 0 8px 0 136px; }
    .hthumb { height: 25px; border: 1px solid #8d939c; border-radius: 2px; background: linear-gradient(#eff1f5, #dfe3ea); display: grid; place-items: center; }
    .hbar .split { width: 11px; height: 24px; border: 1px solid #858b94; background: #fff; }
    .corner { border-right: 4px solid #dfe6f0; background: #dde1e8; border-top: 1px solid #b5bac2; }

    .status { display: flex; align-items: center; height: 33px; flex: none; border-top: 3px solid #8b92a0; background: linear-gradient(#eef0f3, #cfd3d8 50%, #b9bec3); font-size: 15px; color: #3a3e45; padding: 0 3px 3px 8px; }
    .status .bar { width: 2px; height: 27px; background: linear-gradient(90deg, #8e949c 50%, #fff 50%); margin: 0 9px 0 10px; }
    .modes { display: flex; align-items: center; gap: 6px; margin-left: auto; }
    .modes .bar { margin: 0 -3px 0 0; }
    .modes .on { width: 28px; height: 27px; display: grid; place-items: center; margin-right: -3px; border: 1px solid #c29a3a; border-radius: 2px; background: linear-gradient(#ffd873, #ffe680); }
    .pct { margin: 0 17px 0 15px; font-size: 15px; }
    input[type="range"] { appearance: none; width: 151px; height: 22px; margin: 0; background: linear-gradient(#858b95, #858b95) 50% 50% / 100% 1px no-repeat, linear-gradient(#858b95, #858b95) 50% 50% / 1px 8px no-repeat; }
    input[type="range"]::-webkit-slider-thumb { appearance: none; width: 13px; height: 20px; border: 2px solid #7b838f; border-radius: 2px 2px 7px 7px; background: #f5f6f8; }
  `;

  @state() private zoom = 80;

  private visits: [string, number][] = [["Ana Puri", 4], ["Cici Farid", 13], ["Estiono S", 13], ["Caturang", 9], ["Eka Wijay", 5], ["Elisa May", 5], ["Farhunni", 4], ["Galar Tar", 4]];

  private pick(id: string, value: string) {
    return html`<div class="pick"><select id=${id}><option>${value}</option></select><span><svg width="12" height="7" viewBox="0 0 12 7" aria-hidden="true"><path d="M0 0h12L6 7z" fill="#000"/></svg></span></div>`;
  }

  private tri(d: string, w: number, h: number) {
    return html`<svg width=${w} height=${h} viewBox="0 0 ${w} ${h}" aria-hidden="true"><path d=${d} fill="#4a4e55"/></svg>`;
  }

  private titleBar() {
    return html`<header class="title">
      <div class="quick">
        <svg width="23" height="23" viewBox="0 0 23 23" aria-hidden="true"><rect x="1" y="1" width="21" height="21" rx="2" fill="#eaf4e7" stroke="#4c9157" stroke-width="1.500"/><path d="M3 3h12v11L3 17z" fill="#b9e0ab"/><path d="m14 13 8 3v5l-10-3z" fill="#fff" stroke="#8bbd92" stroke-width=".7"/><path d="M16 4h5v8h-6" fill="#d5ebcf"/><path d="m12 16 9 3m-7-4.500 8 3" stroke="#8bbd92" stroke-width=".8"/><path d="m4 4 4 .0 2 3 3-3.500h3L11.500 9.500l4.500 6h-4L9.500 12 6.500 15H3l5-5.500z" fill="#2f9a35" stroke="#1c6c27" stroke-width=".5"/></svg>
        <span class="bar"></span><span class="bar"></span>
        <button aria-label="Sesuaikan"><svg width="9" height="8" viewBox="0 0 9 8"><path d="M0 .5h9v1.200H0zM1.500 4h6L4.500 7.500z" fill="#000"/></svg></button>
      </div>
      <h1>O  -  Aplikasi Terdaftar atas nama :   Sekolah Negeri Nusantara   -   www.berkreasi.net</h1>
      <div class="win">
        <button aria-label="Minimize"><svg width="15" height="15"><path d="M0 7.500h15" stroke="#000"/></svg></button>
        <button aria-label="Restore"><svg width="15" height="15" fill="none" stroke="#000" stroke-width="1.300"><rect x=".7" y="3.500" width="10.800" height="10.800" rx="1.500"/><path d="M3.500 1h7.500q3 0 3 3v7.500"/></svg></button>
        <button aria-label="Close"><svg width="15" height="15"><path d="m.5.5 14 14m0-14-14 14" stroke="#000" stroke-width="1.300"/></svg></button>
      </div>
    </header>
    <nav class="tabs">
      <button class="file">File</button><button class="home">Home</button><button class="paper">Pengaturan Kertas</button>
      <div class="tools">
        <button aria-label="Ciutkan pita"><svg width="13" height="11" viewBox="0 0 13 11"><path d="M1 7.500 6.500 1.500 12 7.500v2H9L6.500 6.500 4 9.500H1z" fill="#fff" stroke="#4c515a" stroke-width="1.200"/></svg></button>
        <button aria-label="Bantuan"><svg width="24" height="24" viewBox="0 0 24 24"><circle cx="12" cy="12" r="11.500" fill="#b5b5b7"/><path d="M8 9.500Q8 6 12 6t4 3.200q0 1.800-2.200 2.800-1.800 1-1.800 3" fill="none" stroke="#fff" stroke-width="2.600"/><rect x="10.600" y="16.500" width="2.800" height="2.800" fill="#fff"/></svg></button>
        <button aria-label="Kecilkan jendela"><svg width="17" height="18"><rect x="1" y="10.500" width="15" height="5" fill="#fff" stroke="#a3a5a9" stroke-width="1.600"/></svg></button>
        <button aria-label="Pulihkan jendela"><svg width="18" height="18" fill="#fff" stroke="#a3a5a9" stroke-width="1.600"><path d="M7 1h10v10H7z"/><path d="M1 6.500h10.500v10H1zM4 10.500h4.500v3H4z"/></svg></button>
        <button aria-label="Tutup jendela"><svg width="18" height="16" viewBox="0 0 18 16"><path d="M1 1h5l3 3.500L12 1h5v3l-4 4 4 4v3h-5l-3-3.500L6 15H1v-3l4-4-4-4z" fill="#fff" stroke="#a3a5a9" stroke-width="1.400"/></svg></button>
      </div>
    </nav>`;
  }

  private pageHead() {
    return html`<div class="head">
      <div class="brand"><a href="#home" aria-label="Home"><svg width="60" height="57" viewBox="0 0 60 57"><ellipse cx="30" cy="28.500" rx="27.500" ry="26" fill="none" stroke="#cfcdc9" stroke-width="4.600"/><path d="M14.500 30 30 16l15.500 14" fill="none" stroke="#cfcdc9" stroke-width="3.200" stroke-linecap="round"/><path d="M30 20.500 42 31.500V43q0 .8-.8.8H33.500V37q0-1.500-3-1.500T27 37v6.800H18.800q-.8 0-.8-.8V31.500z" fill="#cfcdc9"/></svg></a></div>
      <div class="heading"><h2>Grafik Semua</h2><p>Graphics All Participants</p></div>
      <div class="kop"><p>Tampil<br>Tanpa</p><button class="none">---</button>${["Kop 1", "Kop 2", "Kop B", "Alamat", "Kontak"].map(t => html`<button>${t}</button>`)}</div>
      <button class="teks">Teks<br>Editor</button>
      <button class="idea" aria-label="Petunjuk"><svg width="53" height="58" viewBox="0 0 53 58"><path d="M26.500 2C37 2 45 10 45 20c0 9-7 12-9 20H17.500c-2-8-9.500-11-9.500-20C8 10 16 2 26.500 2z" fill="#fec13d" stroke="#0d0d10" stroke-width="2.400"/><path d="M20.500 19.500v-2q0-6 6.300-6t6.300 6q0 3.500-3.600 5.200-3 1.400-3 4.600v1.500" fill="none" stroke="#0d0d10" stroke-width="6.400" stroke-linecap="round"/><path d="M20.500 19v-1.500q0-6 6.300-6t6.300 6q0 3.500-3.600 5.200-3 1.400-3 4.600v1" fill="none" stroke="#fff" stroke-width="3" stroke-linecap="round"/><circle cx="26.600" cy="33.500" r="2.800" fill="#fff" stroke="#0d0d10" stroke-width="1.600"/>
        <rect x="17" y="41" width="19.500" height="5" rx="2" fill="#6d8ba6" stroke="#0d0d10" stroke-width="2"/><path d="M19.500 46.500h14.500V54q0 2-2 2H21.500q-2 0-2-2z" fill="#b7cbe0" stroke="#0d0d10" stroke-width="2.200"/><path d="M20 51h14" stroke="#0d0d10" stroke-width="1.800"/><path d="m1 5.500 6 3.200M0 20.500h5M1.500 35l6-3.200M52 5.500l-6 3.200M53 20.500h-5M51.500 35l-6-3.200" stroke="#0d0d10" stroke-width="2.200"/></svg></button>
    </div>`;
  }

  private sidebar() {
    return html`<aside class="side">
      <div class="field"><label for="logo-a">Logo A :</label>${this.pick("logo-a", "Diknas")}
        <button aria-label="Gambar"><svg width="30" height="25" viewBox="0 0 30 25"><rect x="1" y="1" width="23" height="18" rx="3" fill="#d9456b" stroke="${K}" stroke-width="1.500"/><rect x="3.500" y="3" width="23" height="18.500" rx="3" fill="#f5a53c" stroke="${K}" stroke-width="1.500"/><rect x="6" y="5" width="23" height="19" rx="3" fill="#e8f5fb" stroke="${K}" stroke-width="1.600"/><path d="m7 17 6-6 6 6 4-4 5.500 4v4q0 2.500-2.500 2.500H9Q7 23.500 7 21z" fill="#1aa9e8" stroke="${K}" stroke-width="1.300"/><circle cx="23" cy="9.500" r="2.200" fill="#f8d55d" stroke="${K}"/></svg></button></div>
      <div class="field"><label for="logo-b">Logo B :</label>${this.pick("logo-b", "Konselor")}</div>
      <div class="class"><label for="kelas">Ganti Kelas</label>${this.pick("kelas", "X IPA 1")}
        <button aria-label="Ubah kelas"><svg width="27" height="27" viewBox="0 0 27 27"><path d="M3 1h21q2 0 2 2v17l-6 6H3q-2 0-2-2V3q0-2 2-2z" fill="#eceffb" stroke="${K}" stroke-width="1.600"/><path d="M20 26v-5q0-1 1-1h5z" fill="#ee5b6e" stroke="${K}" stroke-width="1.200"/><path d="M4.500 23.500 6 17 18 6l4.500 4.500-12 11.500z" fill="#fbb24c" stroke="${K}" stroke-width="1.400"/><path d="m18 6 1.500-1.500q3-.5 4.500 1t.5 4L22.500 10.500z" fill="#ee8090" stroke="${K}" stroke-width="1.300"/><path d="m9 18.500 10-9" stroke="${K}"/><path d="m4.500 23.500 1-4 3 3z" fill="${K}"/><path d="M9 24h8" stroke="${K}" stroke-width="1.400"/></svg></button></div>
    </aside>`;
  }

  private emblem() {
    return html`<svg width="82" height="92" viewBox="0 0 82 92" role="img" aria-label="Tut Wuri Handayani">
      <defs><radialGradient id="em"><stop offset="0" stop-color="#6bb3dd"/><stop offset="1" stop-color="#3d87bb"/></radialGradient><path id="arc" d="M14 44Q21 22 41 22t27 22"/></defs>
      <path d="M41 1.500 80.500 34 68 88q-27 5-54 0L1.500 34z" fill="#fff" stroke="#2a2a2a" stroke-width="2.400" stroke-linejoin="round"/>
      <path d="M41 6 76.500 35.500 65 84.500q-24 4-48 0L5.500 35.500z" fill="url(#em)" stroke="#111" stroke-width="2.200" stroke-linejoin="round"/>
      <text font-family="Liberation Sans, sans-serif" font-size="7" font-weight="700" fill="#12202c"><textPath href="#arc">TUTWURI HANDAYANI</textPath></text>
      <path d="M31 26q10-4 20 0l-4 16 2 9q-8 6-16 0l2-9z" fill="#fff" stroke="#234" stroke-width=".8"/><path d="m35 25 3 16m3-17v15m6-14-3 16" stroke="#456" stroke-width=".8"/><circle cx="41" cy="42" r="3" fill="#fff" stroke="#234" stroke-width=".9"/>
      <path d="M36 49q-5 14 4 22-14 0-20-4-1-3 0-3-4-1-4-4-3-2-2-5-2-6 0-13 4 7 10 8 8-1 12-1zM46 49q5 14-4 22 14 0 20-4 1-3 0-3 4-1 4-4 3-2 2-5 2-6 0-13-4 7-10 8-8-1-12-1z" fill="#fff" stroke="#234" stroke-width=".8"/>
      <path d="M17 52q5 4 10 3m-7 4q5 3 9 2m-6 5q5 1 8 0m34-14q-5 4-10 3m7 4q-5 3-9 2m6 5q-5 1-8 0" fill="none" stroke="#567" stroke-width=".7"/>
      <path d="M41 50q5 7 4 11t-4 4-4-4 4-11z" fill="#d8202a" stroke="#701015" stroke-width=".7"/><path d="M38 65h6l-2 9h-2z" fill="#eee" stroke="#234" stroke-width=".7"/>
      <path d="M24 72q10-3 17 2 7-5 17 2l1 5q-10-4-18 0-8-4-18 0z" fill="#fff" stroke="#234" stroke-width="1"/>
    </svg>`;
  }

  private konselor() {
    return html`<svg width="78" height="87" viewBox="0 0 78 87" role="img" aria-label="Konselor">
      <ellipse cx="38" cy="43.500" rx="37.500" ry="43" fill="#ffdb00" stroke="#e5ab1e" stroke-width="1"/>
      <path d="M36 5C18 5 9 24 9 45s12 38 28 38c4 0 7-1 7-1L60 73Q72 62 72 44C72 22 60 5 36 5z" fill="#3279b0"/>
      <path d="M36 5Q46 3 54 10q-10-3-18-5z" fill="#ffdb00"/><path d="M38 5q-6 5-6 15 1 13 12 14 12-1 13-14 0-10-6-14" fill="none" stroke="#e9bd1c" stroke-width="2.600"/>
      <path d="M42 6h5v72h-5z" fill="#ffdb00" stroke="#e5ab1e" stroke-width=".7"/><path d="M42 73h36v10H42z" fill="#ffdb00" stroke="#e5ab1e" stroke-width="1"/>
      <text x="60.500" y="80.500" text-anchor="middle" font-family="Liberation Sans, sans-serif" font-weight="700" font-size="6" fill="#31639a">KONSELOR</text>
    </svg>`;
  }

  private statusBar() {
    return html`<footer class="status">
      <span>Ready</span><span class="bar"></span>
      <button aria-label="Rekam makro"><svg width="23" height="20" viewBox="0 0 23 20"><rect x="3" y="1" width="19" height="17" fill="#fff" stroke="#4d6799"/><path d="M3 1h19v4H3z" fill="#3f64ad"/><path d="M3 9h19M3 13h19M8 5v13m5-13v13m5-13v13" stroke="#8ea3cb"/><circle cx="5.500" cy="5.500" r="4.500" fill="#cf2c2c" stroke="#fff"/></svg></button><span class="bar"></span>
      <div class="modes"><span class="bar"></span>
        <button class="on" aria-label="Normal"><svg width="20" height="16" viewBox="0 0 20 16"><rect x="1" y="1" width="18" height="14" fill="#fff" stroke="#5a5a5a" stroke-width="1.600"/><path d="M1 5.500h18M1 10.500h18M7 1v14m6-14v14" stroke="#5a5a5a" stroke-width="1.500"/></svg></button>
        <button aria-label="Tata letak halaman"><svg width="21" height="18"><rect x="1" y="1" width="19" height="16" fill="#b3b6bb" stroke="#65696f" stroke-width="1.600"/><path d="M5.500 3.500h10v11h-10z" fill="#eee" stroke="#777"/><path d="M7.500 6.500h6m-6 2.500h6m-6 2.500h6" stroke="#888"/></svg></button>
        <button aria-label="Pratinjau hentian"><svg width="21" height="18"><rect x="1" y="1" width="19" height="16" fill="#9fa3a9" stroke="#65696f" stroke-width="1.600"/><path d="M2 2h5v9H2zm6 0h5v9H8z" fill="#f6f6f6"/></svg></button>
      </div>
      <span class="pct">${this.zoom}%</span>
      <button aria-label="Perkecil" @click=${() => (this.zoom = Math.max(10, this.zoom - 10))}><svg width="24" height="24"><circle cx="12" cy="12" r="11" fill="#f1f2f4" stroke="#858b95" stroke-width="1.400"/><path d="M7 12h10" stroke="#777b82" stroke-width="2.600"/></svg></button>
      <input type="range" min="0" max="200" .value=${String(this.zoom)} aria-label="Zoom" @input=${(e: Event) => (this.zoom = Number((e.target as HTMLInputElement).value))}>
      <button aria-label="Perbesar" @click=${() => (this.zoom = Math.min(200, this.zoom + 10))}><svg width="24" height="24"><circle cx="12" cy="12" r="11" fill="#f1f2f4" stroke="#858b95" stroke-width="1.400"/><path d="M6.500 12h11M12 6.500v11" stroke="#777b82" stroke-width="2.600"/></svg></button>
    </footer>`;
  }

  render() {
    return html`<div class="app">
      ${this.titleBar()}
      <ribbon-bar></ribbon-bar>
      <div class="gap"></div>
      <div class="main">
        <div class="view">
          ${this.pageHead()}
          <div class="body">
            ${this.sidebar()}
            <main class="sheet"><div class="page">
              <div class="letter">${this.emblem()}
                <div class="lines"><p>Dinas Pendidikan Propinsi Nusantara</p><p>Sekolah Menengah Pertama - Atas</p><p class="school">Sekolah Negeri Nusantara (Terakreditasi A)</p><p class="unit">Bimbingan Konseling (BK)</p><p class="addr">Jl. Alamat Lengkap no 1 NamaKelurahan NamaKecamatan NamaKota NamaPropinsi 60243</p><p class="addr">Telp.: 0335 644644  Website: www.websekolah.com  Email: email@sekolah.com</p></div>
                ${this.konselor()}</div>
              <div class="band"><h3>GRAFIK HOME VISIT</h3></div>
              <h4 class="kelas">Kelas X IPA 1</h4>
              <div class="card"><visit-chart .points=${this.visits}></visit-chart></div>
            </div></main>
          </div>
        </div>
        <div class="vbar"><span class="split"></span><button aria-label="Gulir naik">${this.tri("M0 8 7.500 0 15 8z", 15, 8)}</button>
          <div class="vtrack"><div class="vthumb"><svg width="9" height="8"><path d="M0 1.500h9M0 4.500h9M0 7.500h9" stroke="#7d838c"/></svg></div></div>
          <button aria-label="Gulir turun">${this.tri("M0 0h15L7.500 8z", 15, 8)}</button></div>
        <div class="hbar"><button aria-label="Gulir kiri">${this.tri("M9 0v16L0 8z", 9, 16)}</button><div class="htrack"><div class="hthumb"><svg width="8" height="9"><path d="M1.500 0v9M4.500 0v9M7.500 0v9" stroke="#7d838c"/></svg></div></div>
          <button aria-label="Gulir kanan">${this.tri("M0 0v16l9-8z", 9, 16)}</button><span class="split"></span></div>
        <div class="corner"></div>
      </div>
      ${this.statusBar()}
    </div>`;
  }
}
